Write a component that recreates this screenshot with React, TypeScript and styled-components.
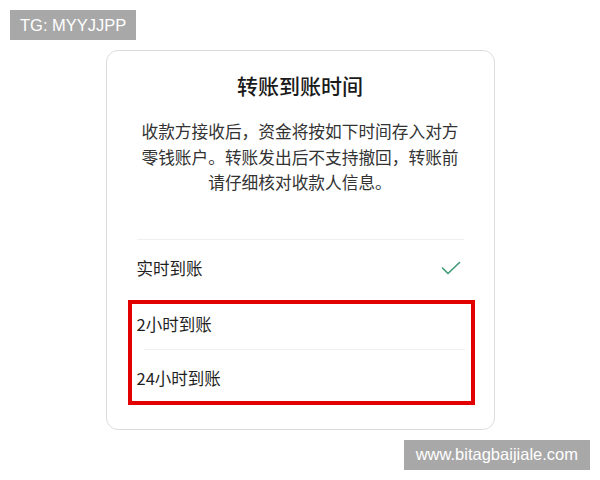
import React from "react";
import styled, { createGlobalStyle } from "styled-components";

const GlobalStyle = createGlobalStyle`
  html, body {
    margin: 0;
    padding: 0;
    background: #fff;
  }
  body {
    font-family: "Noto Sans CJK SC", "Noto Sans", sans-serif;
  }
`;

const Page = styled.div`
  width: 600px;
  height: 480px;
  box-sizing: border-box;
  padding: 10px;
  display: flex;
  flex-direction: column;
  gap: 10px;
`;

const Tag = styled.div<{ $align?: "start" | "end"; $pad?: number }>`
  align-self: ${({ $align }) => ($align === "end" ? "flex-end" : "flex-start")};
  height: 30px;
  padding: 0 ${({ $pad }) => $pad ?? 10}px;
  display: flex;
  align-items: center;
  background: #a8a8a8;
  color: #fff;
  font-family: "Liberation Sans", Arial, sans-serif;
  font-size: 16.5px;
`;

const Card = styled.div`
  align-self: center;
  width: 389px;
  box-sizing: border-box;
  border: 1px solid #dcdcdc;
  border-radius: 12px;
  padding: 19px 30px 24px;
  display: flex;
  flex-direction: column;
`;

const Title = styled.h2`
  margin: 0;
  height: 30px;
  line-height: 30px;
  text-align: center;
  font-size: 21px;
  font-weight: 500;
  color: #1a1a1a;
`;

const Notice = styled.p`
  margin: 19px 0 0;
  font-size: 16.7px;
  line-height: 25.5px;
  text-align: center;
  white-space: nowrap;
  color: #333;
`;

const NoticeLine = styled.span`
  display: block;
`;

const Divider = styled.div<{ $inset?: number }>`
  height: 1px;
  background: #f0f0f0;
  margin-left: ${({ $inset }) => $inset ?? 0}px;
`;

const Option = styled.div<{ $h: number; $pt?: number; $pb?: number }>`
  height: ${({ $h }) => $h}px;
  box-sizing: border-box;
  padding: ${({ $pt }) => $pt ?? 0}px 3px ${({ $pb }) => $pb ?? 0}px 0;
  display: flex;
  align-items: center;
  justify-content: space-between;
  font-size: 16.5px;
  color: #1f1f1f;
`;

const Highlight = styled.div`
  margin: 0 -11px 0 -9px;
  border: 4px solid #e30000;
  padding: 0 6px 0 5px;
`;

const Check = () => (
  <svg width="20" height="14" viewBox="0 0 20 14" fill="none">
    <path d="M1.5 7l5.5 5.5L18.5 1.5" stroke="#3f9a74" strokeWidth="1.6" strokeLinecap="round" strokeLinejoin="round" />
  </svg>
);

const notice = [
  "收款方接收后，资金将按如下时间存入对方",
  "零钱账户。转账发出后不支持撤回，转账前",
  "请仔细核对收款人信息。",
];

export default function App() {
  return (
    <Page>
      <GlobalStyle />
      <Tag>TG: MYYJJPP</Tag>
      <Card>
        <Title>转账到账时间</Title>
        <Notice>
          {notice.map((line) => (
            <NoticeLine key={line}>{line}</NoticeLine>
          ))}
        </Notice>
        <Divider style={{ marginTop: 43 }} />
        <Option $h={60} $pb={4}>
          <span>实时到账</span>
          <Check />
        </Option>
        <Highlight>
          <Option $h={45} $pb={5}>
            <span>2小时到账</span>
          </Option>
          <Divider $inset={7} />
          <Option $h={51} $pt={5}>
            <span>24小时到账</span>
          </Option>
        </Highlight>
      </Card>
      <Tag $align="end" $pad={12}>www.bitagbaijiale.com</Tag>
    </Page>
  );
}
